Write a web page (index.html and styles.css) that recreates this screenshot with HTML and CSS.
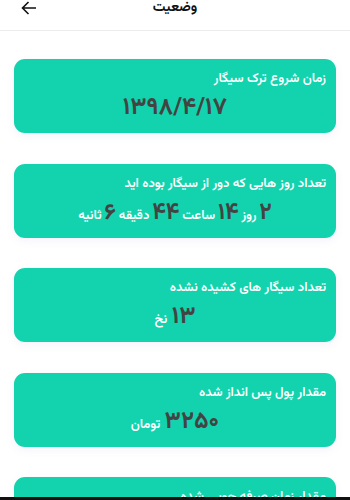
FILE: index.html
```html
<!DOCTYPE html>
<html lang="fa" dir="rtl">
<head>
<meta charset="utf-8">
<link rel="stylesheet" href="styles.css">
</head>
<body>
<header class="topbar">
  <div class="title">وضعیت</div>
  <div class="back">
    <svg width="16" height="14" viewBox="0 0 16 14"><path d="M15 7H1.5M7.5 1L1.5 7l6 6" fill="none" stroke="#111" stroke-width="1.6"/></svg>
  </div>
</header>
<main class="list">
  <section class="card">
    <div class="card-title">زمان شروع ترک سیگار</div>
    <div class="card-value"><span class="num">۱۳۹۸/۴/۱۷</span></div>
  </section>
  <section class="card">
    <div class="card-title">تعداد روز هایی که دور از سیگار بوده اید</div>
    <div class="card-value tight"><span class="num">۲</span> <span class="unit">روز</span> <span class="num">۱۴</span> <span class="unit">ساعت</span> <span class="num">۴۴</span> <span class="unit">دقیقه</span> <span class="num">۶</span> <span class="unit">ثانیه</span></div>
  </section>
  <section class="card">
    <div class="card-title">تعداد سیگار های کشیده نشده</div>
    <div class="card-value"><span class="num">۱۳</span> <span class="unit">نخ</span></div>
  </section>
  <section class="card">
    <div class="card-title">مقدار پول پس انداز شده</div>
    <div class="card-value"><span class="num">۳۲۵۰</span> <span class="unit">تومان</span></div>
  </section>
  <section class="card">
    <div class="card-title">مقدار زمان صرفه جویی شده</div>
    <div class="card-value"><span class="num">۲</span></div>
  </section>
</main>
<div class="navbar"></div>
</body>
</html>
```
FILE: styles.css
```css
html, body {
  margin: 0;
  padding: 0;
  background: #ffffff;
  overflow: hidden;
  height: 500px;
}
body {
  font-family: "Vazirmatn", "Noto Sans Arabic", sans-serif;
  color: #222;
}
.topbar {
  height: 31px;
  border-bottom: 1px solid #ececec;
  display: flex;
  align-items: flex-start;
  position: relative;
  padding: 1px 21px 0;
  box-sizing: border-box;
}
.title {
  position: absolute;
  left: 0;
  right: 0;
  top: -3px;
  text-align: center;
  font-size: 14px;
  font-weight: bold;
  color: #111;
}
.back {
  margin-right: auto;
  line-height: 0;
}
.list {
  display: flex;
  flex-direction: column;
  gap: 30.5px;
  padding: 28px 14px 0 14px;
}
.card {
  background: #13d3ae;
  border-radius: 11px;
  height: 74px;
  box-sizing: border-box;
  padding: 9px 10px 0 10px;
  box-shadow: 0 3px 8px rgba(120, 120, 220, 0.08);
  flex-shrink: 0;
}
.card-title {
  color: #ffffff;
  font-size: 13px;
  font-weight: 600;
  text-align: right;
  line-height: 22px;
}
.card-value {
  text-align: center;
  margin-top: 3px;
  line-height: 30px;
  color: #ffffff;
}
.card-value.tight {
  word-spacing: -1.5px;
}
.tight .num {
  font-size: 23px;
}
.num {
  font-size: 24px;
  font-weight: bold;
  color: #434343;
}
.unit {
  font-size: 13px;
  font-weight: 600;
  color: #ffffff;
}
.navbar {
  position: fixed;
  left: 0;
  right: 0;
  bottom: 0;
  height: 3px;
  background: #111;
}
```
